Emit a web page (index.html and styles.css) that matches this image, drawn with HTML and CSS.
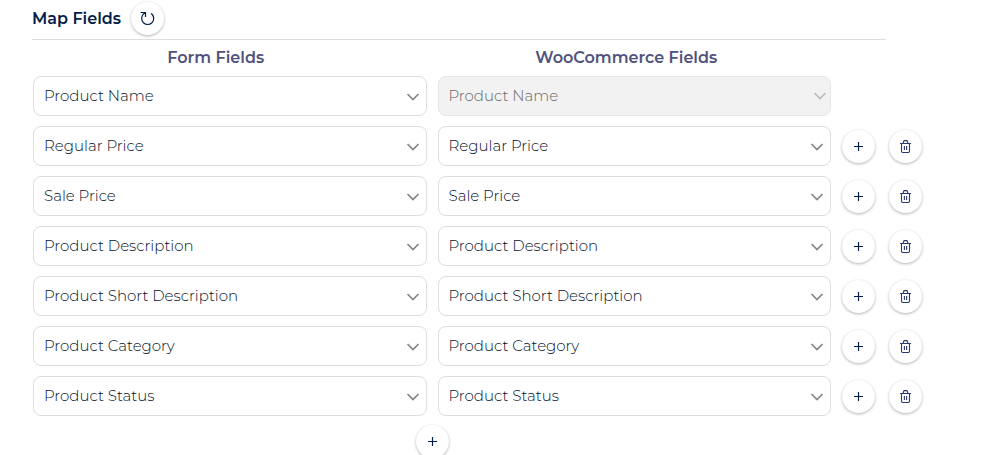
FILE: index.html
```html
<!DOCTYPE html>
<html lang="en">
<head>
<meta charset="utf-8">
<title>Map Fields</title>
<link rel="stylesheet" href="styles.css">
</head>
<body>
<svg class="sprite" aria-hidden="true">
  <symbol id="chevron" viewBox="0 0 14 10"><path d="M1.500 2L7 7.500 12.500 2" fill="none" stroke="currentColor" stroke-width="1.700"/></symbol>
  <symbol id="plus" viewBox="0 0 9 9"><path d="M4.500 0v9M0 4.500h9" fill="none" stroke="currentColor" stroke-width="1.200"/></symbol>
  <symbol id="trash" viewBox="0 0 11 13"><path d="M0 3.500h11M1.500 3.500v7.600q0 1.400 1.400 1.400h5.200q1.400 0 1.400-1.400V3.500M3 3.500L4 .600h3L8 3.500M4.400 6v4M6.600 6v4" fill="none" stroke="currentColor" stroke-width="1.100"/></symbol>
  <symbol id="reload" viewBox="0 0 15 15"><path d="M.5 1.500h5v4.500M5.500 1.500C2.800 3 1.700 5 1.700 7.500a6 6 0 0 0 12 0c0-2.200-.8-3.900-2.600-5.100" fill="none" stroke="currentColor" stroke-width="1.200"/></symbol>
</svg>
<main class="map">
  <header class="map-header">
    <h1 class="title">Map Fields</h1>
    <button class="round" type="button" aria-label="Refresh fields"><svg class="icon-reload"><use href="#reload"/></svg></button>
  </header>
  <div class="body">
    <div class="row headings">
      <h2 class="heading">Form Fields</h2>
      <h2 class="heading second">WooCommerce Fields</h2>
    </div>
    <div class="rows" id="rows"></div>
    <div class="row">
      <div class="add"><button class="round" type="button" aria-label="Add field"><svg class="icon-plus"><use href="#plus"/></svg></button></div>
    </div>
  </div>
</main>
<script src="rows.js"></script>
</body>
</html>
```
FILE: rows.js
```js
const fields = ["Product Name", "Regular Price", "Sale Price", "Product Description",
  "Product Short Description", "Product Category", "Product Status"];

const select = (name, label, locked) => `
  <div class="field${locked ? " locked" : ""}">
    <select class="select" aria-label="${label}"${locked ? " disabled" : ""}>
      ${fields.map(f => `<option${f === name ? " selected" : ""}>${f}</option>`).join("")}
    </select>
    <svg class="chevron"><use href="#chevron"/></svg>
  </div>`;

const button = (icon, label) =>
  `<button class="round" type="button" aria-label="${label}"><svg class="icon-${icon}"><use href="#${icon}"/></svg></button>`;

document.getElementById("rows").innerHTML = fields.map((name, i) => `
  <div class="row">
    ${select(name, "Form field", false)}
    ${select(name, "WooCommerce field", i === 0)}
    ${i ? `<div class="actions">${button("plus", "Add row")}${button("trash", "Delete row")}</div>` : ""}
  </div>`).join("");
```
FILE: styles.css
```css
* {
  box-sizing: border-box;
}

body {
  margin: 0;
  background: #fff;
  color: #041e49;
  font-family: Montserrat, Inter, "Open Sans", sans-serif;
}

.sprite {
  display: none;
}

.map {
  height: 100vh;
  overflow: hidden;
  padding: 2px 84px 0 32px;
}

.map-header {
  display: flex;
  align-items: center;
  gap: 10px;
  margin-right: 36px;
  padding-bottom: 4px;
  border-bottom: 1px solid #dedede;
}

.title {
  margin: 0;
  font-size: 16px;
  line-height: 24px;
  font-weight: 600;
}

.body {
  padding-left: 1px;
}

.row {
  display: grid;
  grid-template-columns: 1fr 1fr 80px;
  column-gap: 11px;
  align-items: center;
}

.headings {
  padding: 6px 0;
}

.heading {
  margin: 0;
  padding-right: 28px;
  text-align: center;
  font-size: 16px;
  line-height: 24px;
  font-weight: 600;
  color: #50527c;
}

.second {
  padding-right: 16px;
}

.rows {
  display: grid;
  gap: 10px;
  padding-bottom: 9px;
}

.field {
  position: relative;
}

.select {
  display: block;
  width: 100%;
  height: 40px;
  padding: 0 32px 0 10px;
  appearance: none;
  border: 1px solid #dedede;
  border-radius: 8px;
  background: #fff;
  color: #041029;
  font: 300 15px/24px Montserrat, Inter, "Open Sans", sans-serif;
}

.select:disabled {
  border-color: #e6e6e6;
  background: #f2f2f2;
  color: #666;
  opacity: 1;
}

.chevron {
  position: absolute;
  top: 16px;
  right: 7px;
  width: 14px;
  height: 10px;
  color: #858585;
  pointer-events: none;
}

.locked .chevron {
  top: 15px;
  right: 4px;
  color: #b8bcc2;
}

.actions {
  display: flex;
  gap: 14px;
}

.round {
  display: grid;
  place-items: center;
  width: 33px;
  height: 33px;
  padding: 0;
  border: 0;
  border-radius: 50%;
  background: #fff;
  box-shadow: 0 1px 3px rgba(0, 0, 0, 0.3);
  color: #041e49;
}

.icon-plus {
  width: 9px;
  height: 9px;
}

.icon-trash {
  width: 11px;
  height: 13px;
  color: #2c3b6e;
}

.icon-reload {
  width: 15px;
  height: 15px;
}

.add {
  grid-column: 1 / 3;
  display: flex;
  justify-content: center;
}
```
